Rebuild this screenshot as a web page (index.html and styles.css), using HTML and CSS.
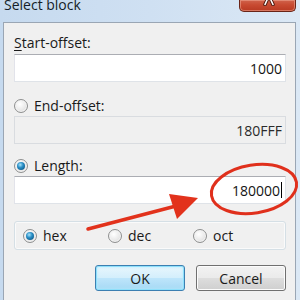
FILE: index.html
```html
<!DOCTYPE html>
<html lang="en">
  <head>
    <meta charset="UTF-8" />
    <title>Select block</title>
    <link rel="stylesheet" href="styles.css" />
  </head>
  <body>
    <div class="window">
      <div class="titlebar">
        <span class="title">Select block</span>
        <div class="close-btn">
          <svg class="close-x" width="12" height="6" viewBox="0 0 12 6">
            <path d="M4.5 -1 L2 4.5 M7.5 -1 L10 4.5" stroke="#4a150b" stroke-width="3.4" stroke-linecap="round" />
            <path d="M4.5 -1 L2 4.5 M7.5 -1 L10 4.5" stroke="#ffffff" stroke-width="1.6" stroke-linecap="round" />
          </svg>
        </div>
      </div>

      <div class="client">
        <div class="field">
          <div class="label"><span><span class="accel">S</span>tart-offset:</span></div>
          <div class="textbox">1000</div>
        </div>

        <div class="field field-end">
          <div class="label"><span class="radio"></span><span>End-offset:</span></div>
          <div class="textbox disabled">180FFF</div>
        </div>

        <div class="field field-length">
          <div class="label"><span class="radio checked"></span><span>Length:</span></div>
          <div class="textbox">180000<span class="caret"></span></div>
        </div>

        <div class="group">
          <div class="option"><span class="radio checked"></span>hex</div>
          <div class="option"><span class="radio"></span>dec</div>
          <div class="option"><span class="radio"></span>oct</div>
        </div>

        <div class="buttons">
          <button class="btn btn-default">OK</button>
          <button class="btn">Cancel</button>
        </div>
      </div>
    </div>

    <!-- red markup drawn over the dialog -->
    <svg class="markup" width="300" height="300" viewBox="0 0 300 300">
      <ellipse cx="254" cy="189" rx="43" ry="24" transform="rotate(-9 254 189)"
        fill="none" stroke="#e0301c" stroke-width="3" />
      <line x1="88" y1="229" x2="176" y2="206" stroke="#e2321c" stroke-width="3.5" stroke-linecap="round" />
      <polygon points="198,198 169,194 177,219" fill="#e2321c" />
    </svg>
  </body>
</html>
```

FILE: styles.css
```css
* {
  margin: 0;
  padding: 0;
  box-sizing: border-box;
}

:root {
  --client-bg: #f0f0f0;
  --text: #1a1a1a;
  --font: "Open Sans", "Noto Sans", sans-serif;
}

body {
  width: 300px;
  height: 300px;
  overflow: hidden;
  position: relative;
  font-family: var(--font);
  font-size: 14px;
  line-height: 19px;
  color: var(--text);
  background: linear-gradient(90deg, #c6daef 0%, #cfe0f2 50%, #dbe8f5 100%);
}

.window {
  height: 300px;
  display: flex;
  flex-direction: column;
  padding: 0 4px 0 3px;
}

/* Title bar */
.titlebar {
  height: 22px;
  flex-shrink: 0;
  display: flex;
  justify-content: space-between;
  align-items: flex-start;
  margin: 0 -4px 0 -2px;
}

.title {
  margin-top: -5px;
  padding-left: 3px;
  color: #151d28;
}

.close-btn {
  width: 57px;
  height: 12px;
  margin-right: 4px;
  border: 1px solid #6a2417;
  border-top: none;
  border-radius: 0 0 5px 5px;
  background: linear-gradient(#d0644d 0%, #c84a31 45%, #b83a22 100%);
  box-shadow: inset 0 0 0 1px rgba(240, 170, 150, 0.55);
  display: flex;
  justify-content: center;
}

.close-x {
  margin-left: 2px;
}

/* Client area */
.client {
  flex: 1;
  background: var(--client-bg);
  border: 1px solid #9aa6b4;
  border-bottom: none;
  padding: 10px 9px 0 10px;
}

.field {
  display: flex;
  flex-direction: column;
}

.field .label {
  display: flex;
  align-items: center;
  gap: 6px;
  height: 19px;
  margin-bottom: 2px;
}

.field-end {
  margin-top: 14px;
}

.field-end .label,
.field-length .label {
  margin-bottom: 1px;
}

.field-length {
  margin-top: 12px;
}

.accel {
  text-decoration: underline;
  text-underline-offset: 2px;
}

.textbox {
  height: 28px;
  display: flex;
  align-items: center;
  justify-content: flex-end;
  padding-right: 3px;
  background: #ffffff;
  border: 1px solid #dfe3e8;
  border-top-color: #abadb3;
  border-left-color: #e2e3ea;
  color: #141414;
}

.textbox.disabled {
  background: #f0f0f0;
  border-color: #d9dce0;
  color: #2a2a2a;
}

.caret {
  width: 1px;
  height: 16px;
  margin-left: 1px;
  background: #000000;
}

/* Radio buttons */
.radio {
  position: relative;
  width: 14px;
  height: 14px;
  flex-shrink: 0;
  border-radius: 50%;
  border: 1px solid #8e8f8f;
  background: radial-gradient(circle at 40% 35%, #ffffff 0%, #e9e9e9 55%, #c9c9c9 100%);
  box-shadow: inset 0 0 0 1px #f4f4f4;
}

.radio.checked::after {
  content: "";
  position: absolute;
  left: 2px;
  top: 2px;
  width: 8px;
  height: 8px;
  border-radius: 50%;
  background: radial-gradient(circle at 40% 35%, #a9e4fb 0%, #2a8fc6 40%, #0f5d8e 80%, #0b3f62 100%);
}

/* Number base group */
.group {
  margin-top: 17px;
  height: 29px;
  display: flex;
  align-items: center;
  padding-left: 8px;
  border: 1px solid #d5dfe5;
  border-radius: 3px;
  box-shadow: inset 0 0 0 1px #fafafa;
}

.option {
  width: 85px;
  display: flex;
  align-items: center;
  gap: 6px;
}

/* Dialog buttons */
.buttons {
  margin-top: 15px;
  display: flex;
  justify-content: flex-end;
  gap: 11px;
}

.btn {
  width: 90px;
  height: 26px;
  font-family: var(--font);
  font-size: 14px;
  color: var(--text);
  border: 1px solid #707070;
  border-radius: 3px;
  background: linear-gradient(#f2f2f2 0%, #ebebeb 48%, #dddddd 52%, #cfcfcf 100%);
  box-shadow: inset 0 0 0 1px #fcfcfc;
}

.btn-default {
  border-color: #3c7fb1;
  background: linear-gradient(#e8f6fd 0%, #d4effc 48%, #bde5fb 52%, #a5d8f4 100%);
  box-shadow: inset 0 0 0 1px #8ee0fb, inset 0 0 3px 1px #b8ecff;
}

/* Red annotation */
.markup {
  position: absolute;
  top: 0;
  left: 0;
  pointer-events: none;
}
```
